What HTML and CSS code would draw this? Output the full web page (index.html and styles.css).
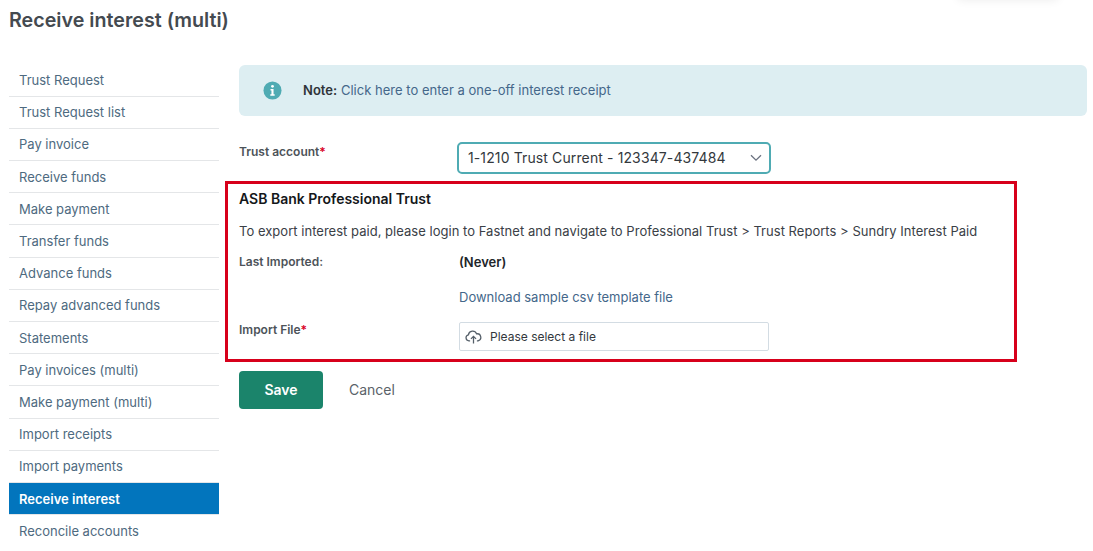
FILE: index.html
```html
<!DOCTYPE html>
<html lang="en">
<head>
<meta charset="utf-8">
<title>Receive interest (multi)</title>
<link rel="stylesheet" href="styles.css">
</head>
<body>
<div class="top-shadow"></div>
<h1 class="title">Receive interest (multi)</h1>
<div class="layout">
  <nav class="side">
    <a class="side-item">Trust Request</a>
    <a class="side-item">Trust Request list</a>
    <a class="side-item">Pay invoice</a>
    <a class="side-item">Receive funds</a>
    <a class="side-item">Make payment</a>
    <a class="side-item">Transfer funds</a>
    <a class="side-item">Advance funds</a>
    <a class="side-item">Repay advanced funds</a>
    <a class="side-item">Statements</a>
    <a class="side-item">Pay invoices (multi)</a>
    <a class="side-item">Make payment (multi)</a>
    <a class="side-item">Import receipts</a>
    <a class="side-item">Import payments</a>
    <a class="side-item active">Receive interest</a>
    <a class="side-item last">Reconcile accounts</a>
  </nav>
  <main class="main">
    <div class="note">
      <svg class="note-icon" viewBox="0 0 20 20" width="19" height="19" aria-hidden="true">
        <circle cx="10" cy="10" r="9.5" fill="#4fabb3"/>
        <circle cx="10" cy="5.6" r="1.5" fill="#fff"/>
        <path d="M7.9 8.4h3.2v5.6h1.2v1.6H7.7V14h1.2V10H7.9z" fill="#fff"/>
      </svg>
      <p class="note-text"><strong>Note:</strong> <a class="link">Click here to enter a one-off interest receipt</a></p>
    </div>
    <div class="row account-row">
      <label class="label">Trust account<span class="req">*</span></label>
      <div class="select">
        <span>1-1210 Trust Current - 123347-437484</span>
        <svg viewBox="0 0 12 8" width="12" height="8" aria-hidden="true"><path d="M1 1.2l5 5 5-5" fill="none" stroke="#6b7280" stroke-width="1.3"/></svg>
      </div>
    </div>
    <section class="bank">
      <h2 class="bank-title">ASB Bank Professional Trust</h2>
      <p class="bank-desc">To export interest paid, please login to Fastnet and navigate to Professional Trust &gt; Trust Reports &gt; Sundry Interest Paid</p>
      <div class="row imported-row">
        <label class="label">Last Imported:</label>
        <strong class="never">(Never)</strong>
      </div>
      <div class="row sample-row">
        <span class="label"></span>
        <a class="link">Download sample csv template file</a>
      </div>
      <div class="row file-row">
        <label class="label">Import File<span class="req">*</span></label>
        <div class="file">
          <svg viewBox="0 0 20 16" width="17" height="14" aria-hidden="true"><path d="M6 12.5H4.6A3.6 3.6 0 0 1 4 5.4 5 5 0 0 1 13.6 4.3 4.2 4.2 0 0 1 15.4 12.5H14M10 15.5V7.5M7 10.2L10 7.2 13 10.2" fill="none" stroke="#555f69" stroke-width="1.5"/></svg>
          <span>Please select a file</span>
        </div>
      </div>
    </section>
    <div class="actions">
      <button class="save" type="button">Save</button>
      <a class="cancel">Cancel</a>
    </div>
  </main>
</div>
</body>
</html>
```
FILE: styles.css
```css
* { box-sizing: border-box; }
html, body { margin: 0; height: 551px; overflow: hidden; background: #fff; }
body {
  font-family: Inter, "Liberation Sans", sans-serif;
  font-size: 13px;
  color: #212529;
  padding: 0 6px 0 9px;
  position: relative;
}
.top-shadow {
  position: absolute;
  top: -12px;
  right: 35px;
  width: 100px;
  height: 12px;
  box-shadow: 0 0 10px rgba(0, 0, 0, .08);
}
.title {
  margin: 0;
  padding-top: 7px;
  height: 64.5px;
  font-size: 19.7px;
  line-height: 26px;
  font-weight: 600;
  color: #444a50;
}
.layout { display: flex; gap: 20px; align-items: flex-start; }
.side { width: 210px; flex: none; display: flex; flex-direction: column; }
.side-item {
  display: block;
  height: 32.2px;
  padding: 6.5px 10px 0;
  line-height: 18.2px;
  color: #4e6a80;
  border-bottom: 1px solid #e4e6e8;
}
.side-item.active { padding-top: 7.2px; background: #0275bd; color: #fff; font-weight: 600; }
.side-item.last { border-bottom: 0; }
.main { flex: 1; min-width: 0; padding-top: .5px; }
.note {
  height: 51px;
  display: flex;
  align-items: center;
  padding: 0 0 1px 24px;
  background: #ddeef2;
  border-radius: 6px;
}
.note-icon { flex: none; margin-right: 21px; }
.note-text { margin: 0; color: #2f3439; letter-spacing: .02px; }
.note-text strong { font-weight: 600; }
.link { color: #44678a; }
.row { display: flex; align-items: flex-start; }
.label {
  width: 220px;
  flex: none;
  font-size: 12px;
  line-height: 16px;
  font-weight: 600;
  color: #4d5359;
}
.req { color: #d8001f; }
.account-row { margin-top: 26px; }
.account-row .label { margin-top: 2px; width: 218px; }
.select {
  width: 314px;
  height: 32px;
  display: flex;
  align-items: center;
  justify-content: space-between;
  padding: 0 7px 1px 9px;
  border: 2px solid #4fabb3;
  border-radius: 5px;
  font-size: 14px;
  letter-spacing: .12px;
  color: #33383d;
}
.bank {
  width: 792px;
  height: 181px;
  margin: 7px 0 0 -14px;
  padding: 6px 10px 0 11px;
  border: 3px solid #d7001b;
}
.bank-title { margin: 0; font-size: 14px; line-height: 18px; font-weight: 600; color: #14171a; }
.bank-desc { margin: 14px 0 0; line-height: 18px; color: #3a4046; letter-spacing: .027px; }
.imported-row { margin-top: 13px; }
.imported-row .label { margin-top: 1px; }
.never { font-weight: 600; line-height: 18px; color: #212529; }
.sample-row { margin-top: 17px; line-height: 18px; }
.sample-row .label { height: 18px; }
.file-row { margin-top: 16px; }
.file {
  width: 310px;
  height: 29px;
  display: flex;
  align-items: center;
  gap: 8px;
  padding-left: 5px;
  border: 1px solid #d3dce3;
  border-radius: 2px;
  font-size: 12px;
  color: #33383d;
}
.actions { display: flex; align-items: center; margin-top: 9px; }
.save {
  width: 84px;
  height: 38px;
  border: 0;
  padding: 0 0 1px;
  border-radius: 4px;
  background: #1b846b;
  color: #fff;
  font: 600 14px Inter, "Liberation Sans", sans-serif;
}
.cancel { margin-left: 26px; font-size: 14px; color: #5a6269; padding-bottom: 1px; }
```
